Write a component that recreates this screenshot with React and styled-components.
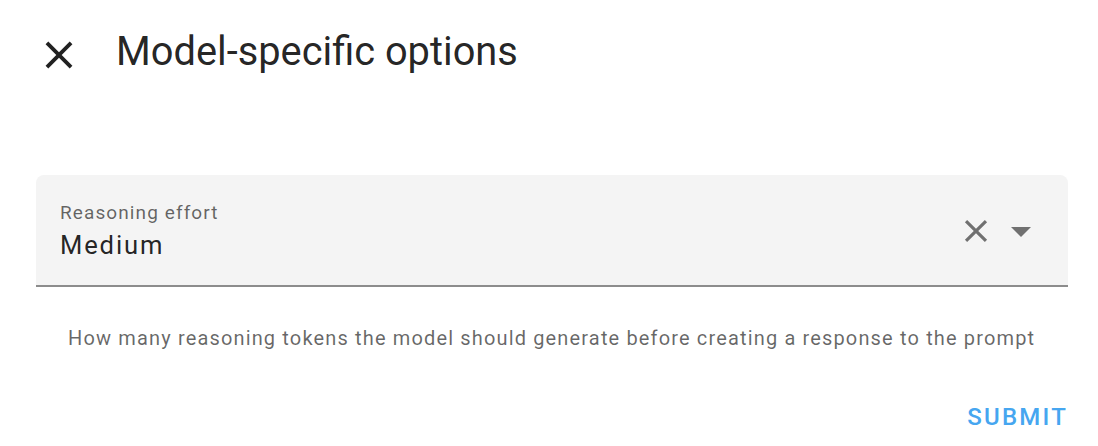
import React from "react";
import styled, { createGlobalStyle } from "styled-components";

const Global = createGlobalStyle`
  html, body { margin: 0; padding: 0; background: #ffffff; }
  body { font-family: Roboto, "Noto Sans", "Liberation Sans", sans-serif; }
`;

const Dialog = styled.div`
  width: 1098px;
  height: 446px;
  box-sizing: border-box;
  padding: 28px 30px 0 36px;
  display: flex;
  flex-direction: column;
  overflow: hidden;
`;

const Header = styled.div`
  display: flex;
  align-items: flex-start;
  gap: 34px;
`;

const IconButton = styled.button`
  width: ${(p) => p.$size}px;
  height: ${(p) => p.$size}px;
  margin-top: ${(p) => p.$offset || 0}px;
  padding: 0;
  border: 0;
  background: transparent;
  display: flex;
  align-items: center;
  justify-content: center;
  color: ${(p) => p.$color};
  flex-shrink: 0;
  cursor: pointer;
  svg { width: 100%; height: 100%; display: block; }
`;

const Title = styled.h2`
  margin: 0;
  font-size: 39.8px;
  line-height: 48px;
  font-weight: 400;
  color: rgba(0, 0, 0, 0.87);
`;

const Field = styled.div`
  margin-top: 97px;
  height: 110px;
  border-bottom: 2px solid #8c8c8c;
  background: #f4f4f4;
  border-radius: 8px 8px 0 0;
  box-sizing: content-box;
  display: flex;
  align-items: flex-start;
  padding: 0 23px 0 24px;
`;

const FieldText = styled.div`
  flex: 1;
  padding-top: 26px;
  display: flex;
  flex-direction: column;
  gap: 4px;
`;

const Label = styled.label`
  font-size: 19px;
  line-height: 24px;
  letter-spacing: 1.1px;
  color: rgba(0, 0, 0, 0.6);
`;

const Value = styled.div`
  font-size: 25.6px;
  line-height: 32px;
  letter-spacing: 1.85px;
  color: rgba(0, 0, 0, 0.87);
`;

const Adornments = styled.div`
  display: flex;
  align-items: center;
  margin-top: 32px;
  gap: 2px;
`;

const Helper = styled.p`
  margin: 37px 0 0 32px;
  font-size: 20px;
  line-height: 28px;
  letter-spacing: 1.15px;
  color: rgba(0, 0, 0, 0.6);
  white-space: nowrap;
`;

const Actions = styled.div`
  display: flex;
  justify-content: flex-end;
  margin-top: 50px;
`;

const TextButton = styled.button`
  border: 0;
  background: transparent;
  padding: 0;
  font-family: inherit;
  font-size: 24px;
  line-height: 30px;
  font-weight: 500;
  letter-spacing: 2.2px;
  color: #46a6f0;
  text-transform: uppercase;
  cursor: pointer;
`;

const CloseIcon = () => (
  <svg viewBox="0 0 24 24" fill="currentColor">
    <path d="M19 6.41 17.59 5 12 10.59 6.41 5 5 6.41 10.59 12 5 17.59 6.41 19 12 13.41 17.59 19 19 17.59 13.41 12z" />
  </svg>
);

const ArrowDropDown = () => (
  <svg viewBox="0 0 24 24" fill="currentColor">
    <path d="M7 10l5 5 5-5z" />
  </svg>
);

export default function App() {
  return (
    <>
      <Global />
      <Dialog>
        <Header>
          <IconButton $size={46} $offset={4} $color="rgba(0,0,0,0.87)" aria-label="close">
            <CloseIcon />
          </IconButton>
          <Title>Model-specific options</Title>
        </Header>
        <Field>
          <FieldText>
            <Label>Reasoning effort</Label>
            <Value>Medium</Value>
          </FieldText>
          <Adornments>
            <IconButton $size={38} $color="rgba(0,0,0,0.54)" aria-label="clear">
              <CloseIcon />
            </IconButton>
            <IconButton $size={48} $color="rgba(0,0,0,0.54)" aria-label="open">
              <ArrowDropDown />
            </IconButton>
          </Adornments>
        </Field>
        <Helper>
          How many reasoning tokens the model should generate before creating a response to the prompt
        </Helper>
        <Actions>
          <TextButton>Submit</TextButton>
        </Actions>
      </Dialog>
    </>
  );
}
